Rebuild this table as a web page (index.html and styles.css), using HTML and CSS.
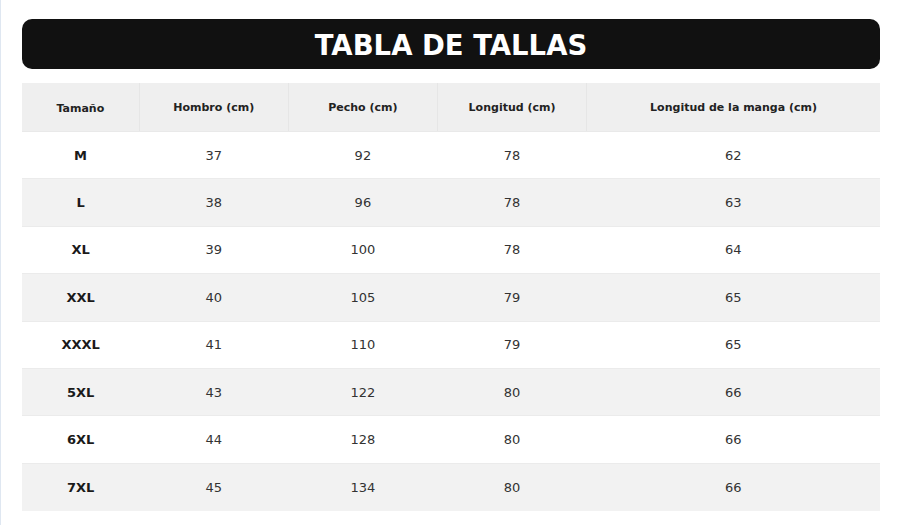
FILE: index.html
```html
<!DOCTYPE html>
<html lang="es">
<head>
<meta charset="utf-8">
<title>Tabla de tallas</title>
<link rel="stylesheet" href="styles.css">
</head>
<body>
<div class="page">
  <h1 class="title">TABLA DE TALLAS</h1>
  <table class="sizes">
    <colgroup>
      <col class="c1"><col class="c2"><col class="c2"><col class="c2"><col class="c5">
    </colgroup>
    <thead>
      <tr><th>Tamaño</th><th>Hombro (cm)</th><th>Pecho (cm)</th><th>Longitud (cm)</th><th>Longitud de la manga (cm)</th></tr>
    </thead>
    <tbody>
      <tr><td class="sz">M</td><td>37</td><td>92</td><td>78</td><td>62</td></tr>
      <tr><td class="sz">L</td><td>38</td><td>96</td><td>78</td><td>63</td></tr>
      <tr><td class="sz">XL</td><td>39</td><td>100</td><td>78</td><td>64</td></tr>
      <tr><td class="sz">XXL</td><td>40</td><td>105</td><td>79</td><td>65</td></tr>
      <tr><td class="sz">XXXL</td><td>41</td><td>110</td><td>79</td><td>65</td></tr>
      <tr><td class="sz">5XL</td><td>43</td><td>122</td><td>80</td><td>66</td></tr>
      <tr><td class="sz">6XL</td><td>44</td><td>128</td><td>80</td><td>66</td></tr>
      <tr><td class="sz">7XL</td><td>45</td><td>134</td><td>80</td><td>66</td></tr>
    </tbody>
  </table>
</div>
</body>
</html>
```
FILE: styles.css
```css
html, body {
  margin: 0;
  padding: 0;
  background: #ffffff;
}
body {
  font-family: "DejaVu Sans", "Liberation Sans", sans-serif;
  color: #222;
  min-height: 525px;
  border-left: 1px solid #dfe7f1;
  box-sizing: border-box;
}
.page {
  padding: 19px 19px 0 21px;
  width: 858px;
}
.title {
  margin: 0 0 14px 0;
  height: 50px;
  background: #111111;
  border-radius: 10px;
  color: #ffffff;
  font-size: 27.5px;
  font-weight: bold;
  line-height: 52px;
  text-align: center;
  letter-spacing: 0;
  overflow: hidden;
}
.sizes {
  width: 858px;
  border-collapse: collapse;
  table-layout: fixed;
}
.c1 { width: 117px; }
.c2 { width: 149px; }
.c5 { width: 293px; }
.sizes th {
  background: #efefef;
  font-size: 11px;
  font-weight: bold;
  color: #222;
  height: 48.5px;
  padding: 0;
  text-align: center;
  border-right: 1px solid #e6e6e6;
  border-bottom: 1px solid #e9e9e9;
  box-sizing: border-box;
}
.sizes th:first-child { padding-top: 2px; }
.sizes th:last-child { border-right: none; }
.sizes td {
  height: 47.4px;
  padding: 0;
  text-align: center;
  font-size: 13px;
  color: #333;
  border-bottom: 1px solid #ebebeb;
  box-sizing: border-box;
}
.sizes tbody tr:nth-child(even) td { background: #f2f2f2; }
.sizes tbody tr:last-child td { border-bottom: none; }
.sizes td.sz {
  font-weight: bold;
  color: #1a1a1a;
}
```
